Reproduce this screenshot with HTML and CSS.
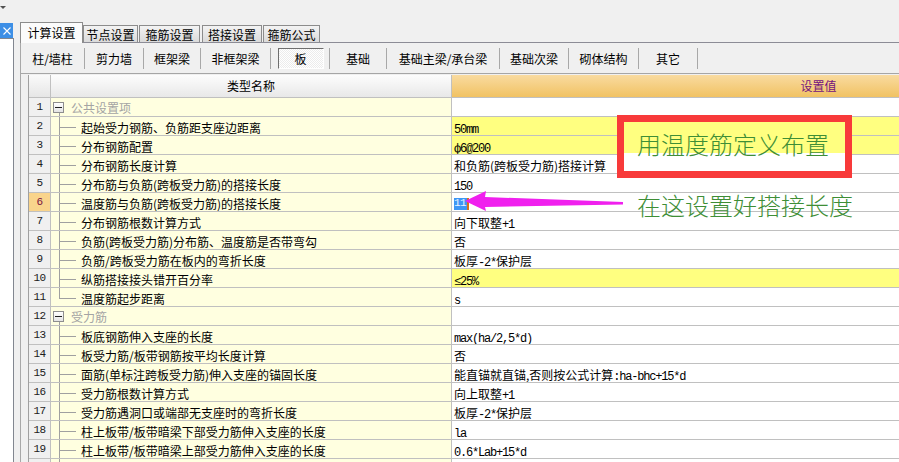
FILE: index.html
```html
<!DOCTYPE html>
<html>
<head>
<meta charset="utf-8">
<link rel="stylesheet" href="styles.css">
</head>
<body>
<div class="app">
  <div class="topbar"><span class="drop"></span></div>
  <div class="main">
    <div class="side">
      <div class="close"><svg width="8" height="8" viewBox="0 0 8 8"><path d="M0.5 0.5 L7.5 7.5 M7.5 0.5 L0.5 7.5" stroke="#fff" stroke-width="1.1" fill="none"/></svg></div>
      <div class="sidepanel"></div>
    </div>
    <div class="tabctl">
      <div class="tabs">
        <div class="tab active">计算设置</div>
        <div class="tab">节点设置</div>
        <div class="tab">箍筋设置</div>
        <div class="tab">搭接设置</div>
        <div class="tab">箍筋公式</div>
      </div>
      <div class="tabbody">
        <div class="toolbar">
          <div class="tb">柱/墙柱</div><i class="sep"></i>
          <div class="tb">剪力墙</div><i class="sep"></i>
          <div class="tb">框架梁</div><i class="sep"></i>
          <div class="tb">非框架梁</div><i class="sep"></i>
          <div class="tb"><span class="pressed">板</span></div><i class="sep"></i>
          <div class="tb">基础</div><i class="sep"></i>
          <div class="tb">基础主梁/承台梁</div><i class="sep"></i>
          <div class="tb">基础次梁</div><i class="sep"></i>
          <div class="tb">砌体结构</div><i class="sep"></i>
          <div class="tb">其它</div><i class="sep"></i>
        </div>
        <div class="grid">
          <div class="h hn"></div><div class="h hname">类型名称</div><div class="h hval">设置值</div>

          <div class="num">1</div><div class="n g"><span class="box"></span>公共设置项</div><div class="v"></div>
          <div class="num">2</div><div class="n c">起始受力钢筋、负筋距支座边距离</div><div class="v y"><span class="l">50mm</span></div>
          <div class="num">3</div><div class="n c">分布钢筋配置</div><div class="v y"><span class="l">&#1092;6@200</span></div>
          <div class="num">4</div><div class="n c">分布钢筋长度计算</div><div class="v">和负筋(跨板受力筋)搭接计算</div>
          <div class="num">5</div><div class="n c">分布筋与负筋(跨板受力筋)的搭接长度</div><div class="v"><span class="l">150</span></div>
          <div class="num cur">6</div><div class="n c">温度筋与负筋(跨板受力筋)的搭接长度</div><div class="v"><span class="sel">11</span></div>
          <div class="num">7</div><div class="n c">分布钢筋根数计算方式</div><div class="v">向下取整<span class="l">+1</span></div>
          <div class="num">8</div><div class="n c">负筋(跨板受力筋)分布筋、温度筋是否带弯勾</div><div class="v">否</div>
          <div class="num">9</div><div class="n c">负筋/跨板受力筋在板内的弯折长度</div><div class="v">板厚<span class="l">-2*</span>保护层</div>
          <div class="num">10</div><div class="n c">纵筋搭接接头错开百分率</div><div class="v y"><span class="l">&le;25%</span></div>
          <div class="num">11</div><div class="n c last">温度筋起步距离</div><div class="v"><span class="l">s</span></div>
          <div class="num">12</div><div class="n g"><span class="box"></span>受力筋</div><div class="v"></div>
          <div class="num">13</div><div class="n c">板底钢筋伸入支座的长度</div><div class="v"><span class="l">max(ha/2,5*d)</span></div>
          <div class="num">14</div><div class="n c">板受力筋/板带钢筋按平均长度计算</div><div class="v">否</div>
          <div class="num">15</div><div class="n c">面筋(单标注跨板受力筋)伸入支座的锚固长度</div><div class="v">能直锚就直锚,否则按公式计算<span class="l">:ha-bhc+15*d</span></div>
          <div class="num">16</div><div class="n c">受力筋根数计算方式</div><div class="v">向上取整<span class="l">+1</span></div>
          <div class="num">17</div><div class="n c">受力筋遇洞口或端部无支座时的弯折长度</div><div class="v">板厚<span class="l">-2*</span>保护层</div>
          <div class="num">18</div><div class="n c">柱上板带/板带暗梁下部受力筋伸入支座的长度</div><div class="v"><span class="l">la</span></div>
          <div class="num">19</div><div class="n c">柱上板带/板带暗梁上部受力筋伸入支座的长度</div><div class="v"><span class="l">0.6*Lab+15*d</span></div>
          <div class="num"></div><div class="n c"></div><div class="v"></div>
        </div>
      </div>
    </div>
  </div>

  <div class="redbox"><span class="note">用温度筋定义布置</span></div>
  <div class="note2">在这设置好搭接长度</div>
  <svg class="arrow" width="170" height="30" viewBox="460 186 170 30">
    <path d="M465 201 L486 191 L485 197 L623 202 L623 204.5 L485 207 L486 211 Z" fill="#f020ee"/>
  </svg>
</div>
</body>
</html>
```
FILE: styles.css
```css
* { box-sizing: border-box; }
html, body { margin: 0; padding: 0; }
body {
  background: #f0f0f0;
  font-family: "Noto Sans CJK SC", "Liberation Sans", sans-serif;
  font-size: 12px;
  color: #000;
}
.app {
  position: relative;
  width: 899px;
  height: 462px;
  overflow: hidden;
  display: flex;
  flex-direction: column;
}
.topbar { height: 22px; flex: none; }
.drop {
  display: block;
  width: 0; height: 0;
  margin-top: 6px;
  border-left: 3px solid transparent;
  border-right: 3px solid transparent;
  border-top: 3px solid #505050;
}
.main { flex: 1; display: flex; min-height: 0; }
.side { width: 20px; flex: none; display: flex; flex-direction: column; }
.close {
  width: 13px; height: 15px;
  margin-top: 1px;
  background: #3d8fe6;
  display: flex; align-items: center; justify-content: center;
}
.sidepanel {
  width: 14px; flex: 1;
  background: #fff;
  border-top: 1px solid #828790;
  border-right: 1px solid #828790;
}
.tabctl { flex: 1; display: flex; flex-direction: column; min-width: 0; }
.tabs { height: 20px; flex: none; display: flex; align-items: flex-end; position: relative; z-index: 1; }
.tab {
  height: 17px;
  border: 1px solid #8c8c8c;
  border-bottom: none;
  background: linear-gradient(#f3f3f3, #dadada);
  line-height: 17px;
  text-align: center;
  white-space: nowrap;
  margin-right: 1px;
}
.tab:nth-child(2) { width: 55px; margin-right: 1px; }
.tab:nth-child(3) { width: 61px; margin-right: 2px; }
.tab:nth-child(4) { width: 60px; margin-right: 1px; }
.tab:nth-child(5) { width: 57px; }
.tab.active {
  width: 63px;
  height: 21px;
  margin-bottom: -1px;
  margin-right: 0;
  background: #fbfbfb;
  line-height: 20px;
}
.tabbody {
  flex: 1;
  min-height: 0;
  border-top: 1px solid #8c8c96;
  border-left: 1px solid #a8a8a8;
  overflow: hidden;
  display: flex;
  flex-direction: column;
}
.toolbar {
  height: 31px;
  flex: none;
  border-bottom: 1px solid #a6a6a6;
  display: flex;
  align-items: center;
}
.tb {
  height: 30px;
  display: flex;
  align-items: center;
  justify-content: center;
  white-space: nowrap;
}
.tb:nth-of-type(1) { width: 63px; }
.tb:nth-of-type(2) { width: 58px; }
.tb:nth-of-type(3) { width: 56px; }
.tb:nth-of-type(4) { width: 69px; }
.tb:nth-of-type(5) { width: 58px; }
.tb:nth-of-type(6) { width: 56px; }
.tb:nth-of-type(7) { width: 112px; }
.tb:nth-of-type(8) { width: 68px; }
.tb:nth-of-type(9) { width: 69px; }
.tb:nth-of-type(10) { width: 58px; }
.sep { display: block; width: 1px; height: 21px; background: #a8a8a8; flex: none; }
.pressed {
  width: 46px; height: 21px;
  margin-left: 1px;
  display: flex; align-items: center; justify-content: center;
  border-top: 1px solid #6e6e6e;
  border-left: 1px solid #6e6e6e;
  border-right: 1px solid #fff;
  border-bottom: 1px solid #fff;
  background: repeating-conic-gradient(#ffffff 0 25%, #ececec 0 50%) 0 0 / 2px 2px;
}
.grid {
  margin-top: 1px;
  margin-left: 7px;
  border-left: 1px solid #a0a0a0;
  display: grid;
  grid-template-columns: 22px 401px 734px;
  grid-template-rows: 23px;
  grid-auto-rows: 19px;
}
.grid > div {
  border-right: 1px solid #c0c0c0;
  border-bottom: 1px solid #c0c0c0;
  white-space: nowrap;
  overflow: hidden;
}
.h { line-height: 22px; text-align: center; }
.hn { background: linear-gradient(#fafafa, #e6e6e6); }
.hname { background: linear-gradient(#fdfdfd, #e8e8e8); }
.hval { background: linear-gradient(#f9dba0, #f1c263); color: #74127e; }
.num {
  background: #f0f0f0;
  text-align: center;
  font-family: "Liberation Mono", monospace;
  font-size: 11px;
  letter-spacing: -0.6px;
  line-height: 18px;
  color: #202020;
}
.num.cur { background: #f9d48c; color: #7a1040; }
.n {
  background-color: #ffffe0;
  padding-top: 3px;
  line-height: 15px;
  padding-left: 30px;
}
.n.c {
  background-image:
    linear-gradient(#a0a0a0, #a0a0a0),
    linear-gradient(#a0a0a0, #a0a0a0);
  background-position: 8px 0, 9px 10px;
  background-size: 1px 100%, 16px 1px;
  background-repeat: no-repeat;
}
.n.c.last { background-size: 1px 11px, 16px 1px; }
.n.g {
  padding: 0 0 0 2px;
  display: flex;
  align-items: center;
  color: #a4a4a4;
  background-image: linear-gradient(#a0a0a0, #a0a0a0);
  background-position: 8px 15px;
  background-size: 1px 4px;
  background-repeat: no-repeat;
}
.box {
  width: 11px; height: 11px;
  margin-right: 7px;
  margin-top: 1px;
  border: 1px solid #8e8e8e;
  background: linear-gradient(#ffffff, #e4e4e4);
  position: relative;
  flex: none;
}
.box::after {
  content: "";
  position: absolute;
  left: 1px; top: 4px;
  width: 7px; height: 1px;
  background: #202020;
}
.v {
  background: #fff;
  padding-left: 2px;
  padding-top: 3px;
  line-height: 15px;
}
.v.y { background: #ffff80; }
.l {
  font-family: "Liberation Mono", monospace;
  font-size: 12px;
  letter-spacing: -1.2px;
}
.sel {
  display: inline-block;
  font-family: "Liberation Mono", monospace;
  font-size: 11px;
  letter-spacing: -0.6px;
  line-height: 11px;
  height: 12px;
  margin-top: 2px;
  padding: 0 1px 0 0;
  background: #3d96f5;
  color: #e8f2ff;
  border-right: 2px solid #d8701c;
  vertical-align: top;
}
.redbox {
  position: absolute;
  left: 617px; top: 115px;
  width: 235px; height: 63px;
  border: 7px solid #f83a3a;
  background: linear-gradient(#ffff80 0 31px, #ffffff 31px);
  padding: 10px 0 0 13px;
}
.note, .note2 {
  display: block;
  font-family: "Noto Sans CJK SC", sans-serif;
  font-weight: 300;
  font-size: 24px;
  line-height: 24px;
  color: #3e8e36;
  white-space: nowrap;
}
.note2 {
  position: absolute;
  left: 637px; top: 193px;
}
.arrow { position: absolute; left: 460px; top: 186px; }
```
